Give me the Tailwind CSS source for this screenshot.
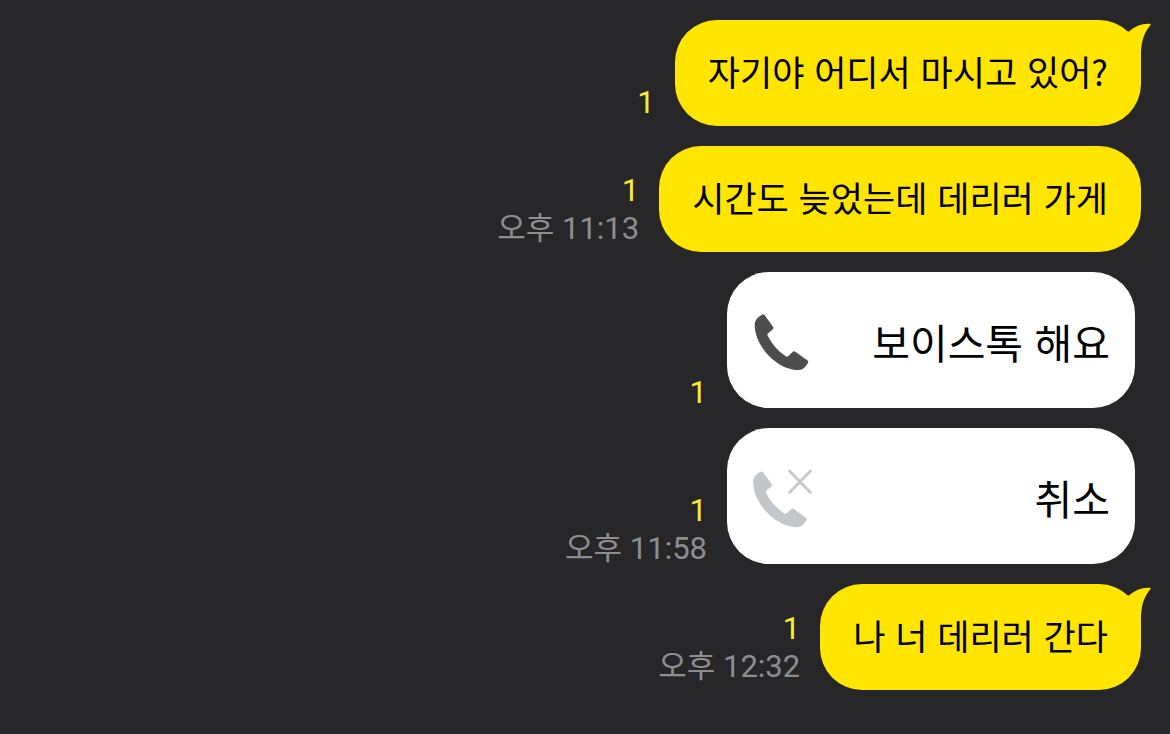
<!DOCTYPE html>
<html lang="ko">
<head>
    <meta charset="UTF-8">
    <meta name="viewport" content="width=device-width, initial-scale=1.0">
    <title>채팅</title>
    <script src="https://cdn.jsdelivr.net/npm/@tailwindcss/browser@4"></script>
</head>
<body class="min-h-screen bg-[#272729] font-['Roboto','Noto_Sans_CJK_KR',sans-serif]">

    <main class="flex flex-col items-end gap-5 py-5 pr-[29px]">

        <!-- first message of a group has the tail -->
        <div class="flex items-end gap-5">
            <div class="pb-1 text-right text-[31px] leading-[38px]">
                <p class="text-[#fee933]">1</p>
            </div>
            <div class="relative rounded-[42px] bg-[#ffe500] px-[33px] pt-6 pb-7">
                <p class="font-['Noto_Sans_CJK_KR',sans-serif] text-[35px] leading-[54px] text-black">자기야 어디서 마시고 있어?</p>
                <svg class="absolute top-0 -right-[10px] h-[42px] w-[26px]" viewBox="0 0 26 42" fill="#ffe500" aria-hidden="true">
                    <path d="M4 11.5C10 6 17 3.2 25 3.7Q26.4 3.9 25.5 5C19.5 12 16.6 20 16 32V42H0V12Z"/>
                </svg>
            </div>
        </div>

        <div class="flex items-end gap-5">
            <div class="pb-1 text-right text-[31px] leading-[38px]">
                <p class="text-[#fee933]">1</p>
                <p class="text-[#8e8e90]">오후 11:13</p>
            </div>
            <div class="rounded-[42px] bg-[#ffe500] px-[33px] pt-6 pb-7">
                <p class="font-['Noto_Sans_CJK_KR',sans-serif] text-[35px] leading-[54px] text-black">시간도 늦었는데 데리러 가게</p>
            </div>
        </div>

        <!-- voice talk -->
        <div class="mr-[6px] flex items-end gap-5">
            <div class="-mb-1 text-right text-[31px] leading-[38px]">
                <p class="text-[#fee933]">1</p>
            </div>
            <div class="flex w-[408px] items-center justify-between rounded-[42px] bg-white px-[25px] pt-[38px] pb-9">
                <svg class="size-[62px]" viewBox="0 0 62 62" fill="#4d4d4d" aria-hidden="true">
                    <path d="M9.5 4.9Q11.3 3.6 12.7 5.3L21 16.8Q22 18.2 20.8 19.3L16 23.4Q15 24.4 15.7 25.8C20 34.4 26 41 33.4 46Q35 47.1 36.3 46L40.8 41.8Q42 40.8 43.4 41.7L55.2 50.2Q57 51.5 55.8 53.2C53.5 56.8 51 59.8 46.5 60C25 60 2.7 36 2.7 15C2.7 10 5.5 7.5 9.5 4.9Z"/>
                </svg>
                <p class="font-['Noto_Sans_CJK_KR',sans-serif] text-[41px] leading-[62px] text-black">보이스톡 해요</p>
            </div>
        </div>

        <div class="mr-[6px] flex items-end gap-5">
            <div class="-mb-1 text-right text-[31px] leading-[38px]">
                <p class="text-[#fee933]">1</p>
                <p class="text-[#8e8e90]">오후 11:58</p>
            </div>
            <div class="flex w-[408px] items-center justify-between rounded-[42px] bg-white px-[25px] pt-[38px] pb-9">
                <svg class="size-[62px]" viewBox="0 0 62 62" fill="#c4c7c9" aria-hidden="true">
                    <path transform="translate(-1.5 1.2)" d="M9.5 4.9Q11.3 3.6 12.7 5.3L21 16.8Q22 18.2 20.8 19.3L16 23.4Q15 24.4 15.7 25.8C20 34.4 26 41 33.4 46Q35 47.1 36.3 46L40.8 41.8Q42 40.8 43.4 41.7L55.2 50.2Q57 51.5 55.8 53.2C53.5 56.8 51 59.8 46.5 60C25 60 2.7 36 2.7 15C2.7 10 5.5 7.5 9.5 4.9Z"/>
                    <path d="M37.5 5L58.5 26.5M58.5 5L37.5 26.5" stroke="#c8c8c8" stroke-width="2.6" stroke-linecap="round"/>
                </svg>
                <p class="font-['Noto_Sans_CJK_KR',sans-serif] text-[41px] leading-[62px] text-black">취소</p>
            </div>
        </div>

        <div class="flex items-end gap-5">
            <div class="pb-1 text-right text-[31px] leading-[38px]">
                <p class="text-[#fee933]">1</p>
                <p class="text-[#8e8e90]">오후 12:32</p>
            </div>
            <div class="relative rounded-[42px] bg-[#ffe500] px-[33px] pt-6 pb-7">
                <p class="font-['Noto_Sans_CJK_KR',sans-serif] text-[35px] leading-[54px] text-black">나 너 데리러 간다</p>
                <svg class="absolute top-0 -right-[10px] h-[42px] w-[26px]" viewBox="0 0 26 42" fill="#ffe500" aria-hidden="true">
                    <path d="M4 11.5C10 6 17 3.2 25 3.7Q26.4 3.9 25.5 5C19.5 12 16.6 20 16 32V42H0V12Z"/>
                </svg>
            </div>
        </div>

    </main>

</body>
</html>
